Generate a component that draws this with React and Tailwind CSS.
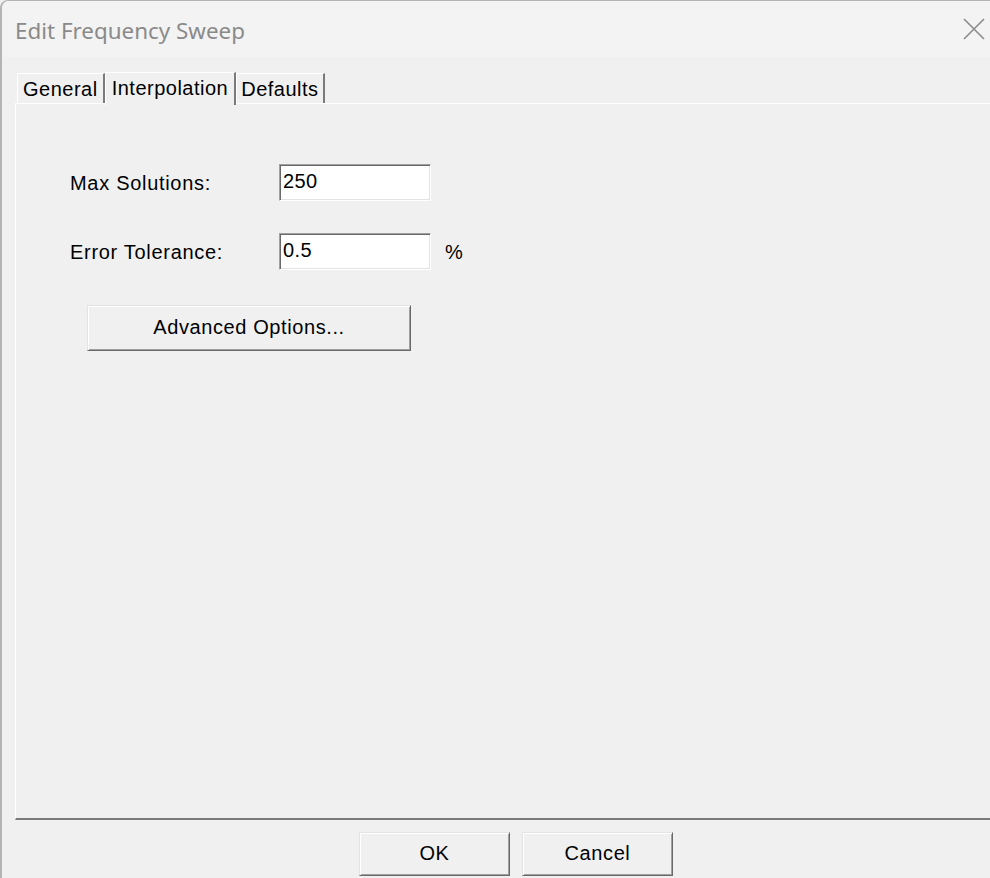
import React from 'react';

const font = { fontFamily: '"Liberation Sans", Arial, sans-serif' };

const Tab = ({ label, active, px = 'px-[5px]' }) => (
    <div
        className={`border-l border-t border-r-2 border-l-white border-t-white border-r-[#7a7a7a] bg-[#f0f0f0] text-[20px] tracking-[0.5px] text-black leading-none flex items-start ${px} ${
            active ? 'relative z-10 -mb-[2px] h-[33px] pt-[5px] border-b-0' : 'h-[30px] pt-[5px]'
        }`}
    >
        {label}
    </div>
);

const Field = ({ value }) => (
    <div className="w-[152px] h-[37px] bg-white border border-t-[#a0a0a0] border-l-[#a0a0a0] border-r-white border-b-white shadow-[inset_1px_1px_0_#696969,inset_-1px_-1px_0_#e3e3e3] flex items-center pl-[3px] pb-[3px] text-[20px] tracking-[0.4px] text-black">
        {value}
    </div>
);

const Button = ({ children, className = '' }) => (
    <button
        className={`bg-[#f0f0f0] border border-t-[#e3e3e3] border-l-[#e3e3e3] border-r-[#696969] border-b-[#696969] shadow-[inset_1px_1px_0_#ffffff,inset_-1px_-1px_0_#a0a0a0] text-[20px] tracking-[0.6px] text-black flex items-center justify-center ${className}`}
    >
        {children}
    </button>
);

export default function App() {
    return (
        <div className="w-[990px] h-[878px] overflow-hidden bg-[#f0f0f0]" style={font}>
            <div className="h-full flex flex-col rounded-tl-[8px] border-l-2 border-t border-[#b4b4b4] bg-[#f0f0f0]">
                {/* Title bar */}
                <div className="h-[56px] shrink-0 bg-[#f3f3f3] rounded-tl-[8px] flex items-center justify-between pl-[13px] pr-[5px]">
                    <span
                        className="text-[22.4px] text-[#8a8a8a] pt-[4px]"
                        style={{ fontFamily: '"Noto Sans", "Open Sans", sans-serif' }}
                    >
                        Edit Frequency Sweep
                    </span>
                    <svg width="22" height="22" viewBox="0 0 22 22" className="mb-[1px]">
                        <path d="M1 1 L21 21 M21 1 L1 21" stroke="#8b8b8b" strokeWidth="1.6" fill="none" />
                    </svg>
                </div>

                {/* Body */}
                <div className="flex-1 flex flex-col pl-[13px]">
                    <div className="flex items-end h-[46px] pl-[2px]">
                        <Tab label="General" px="px-[5px]" />
                        <Tab label="Interpolation" active px="px-[6px]" />
                        <Tab label="Defaults" px="px-[4px]" />
                    </div>

                    <div className="h-[717px] -mr-[10px] border-l border-t border-l-white border-t-white border-b-2 border-b-[#7a7a7a] pl-[54px] pt-[60px]">
                        <div className="flex items-center">
                            <span className="w-[209px] text-[20px] tracking-[0.7px] text-black">Max Solutions:</span>
                            <Field value="250" />
                        </div>
                        <div className="flex items-center mt-[32px]">
                            <span className="w-[209px] text-[20px] tracking-[0.7px] text-black">Error Tolerance:</span>
                            <Field value="0.5" />
                            <span className="ml-[14px] text-[20px] text-black">%</span>
                        </div>
                        <Button className="ml-[17px] mt-[35px] w-[324px] h-[46px] pb-[2px]">Advanced Options...</Button>
                    </div>

                    <div className="flex gap-[12px] pt-[12px] pl-[344px]">
                        <Button className="w-[151px] h-[44px] pb-[2px]">OK</Button>
                        <Button className="w-[151px] h-[44px] pb-[2px]">Cancel</Button>
                    </div>
                </div>
            </div>
        </div>
    );
}
